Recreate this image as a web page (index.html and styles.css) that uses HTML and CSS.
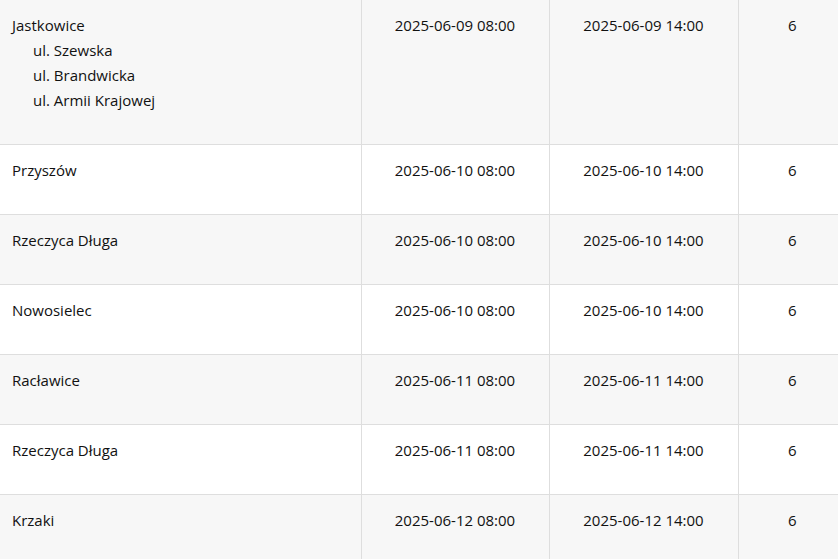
FILE: index.html
```html
<!DOCTYPE html>
<html lang="pl">
<head>
<meta charset="utf-8">
<link rel="stylesheet" href="styles.css">
</head>
<body>
<table class="schedule">
  <colgroup>
    <col class="c-place"><col class="c-date"><col class="c-date2"><col class="c-num">
  </colgroup>
  <tbody>
    <tr class="alt">
      <td class="place">Jastkowice
        <ul class="streets">
          <li>ul. Szewska</li>
          <li>ul. Brandwicka</li>
          <li>ul. Armii Krajowej</li>
        </ul>
      </td>
      <td>2025-06-09 08:00</td><td>2025-06-09 14:00</td><td>6</td>
    </tr>
    <tr>
      <td class="place">Przyszów</td>
      <td>2025-06-10 08:00</td><td>2025-06-10 14:00</td><td>6</td>
    </tr>
    <tr class="alt">
      <td class="place">Rzeczyca Długa</td>
      <td>2025-06-10 08:00</td><td>2025-06-10 14:00</td><td>6</td>
    </tr>
    <tr>
      <td class="place">Nowosielec</td>
      <td>2025-06-10 08:00</td><td>2025-06-10 14:00</td><td>6</td>
    </tr>
    <tr class="alt">
      <td class="place">Racławice</td>
      <td>2025-06-11 08:00</td><td>2025-06-11 14:00</td><td>6</td>
    </tr>
    <tr>
      <td class="place">Rzeczyca Długa</td>
      <td>2025-06-11 08:00</td><td>2025-06-11 14:00</td><td>6</td>
    </tr>
    <tr class="alt">
      <td class="place">Krzaki</td>
      <td>2025-06-12 08:00</td><td>2025-06-12 14:00</td><td>6</td>
    </tr>
  </tbody>
</table>
</body>
</html>
```
FILE: styles.css
```css
html, body {
  margin: 0;
  padding: 0;
  background: #fff;
  overflow: hidden;
}
.schedule {
  border-collapse: collapse;
  table-layout: fixed;
  width: 846px;
  font-family: "Open Sans", "Noto Sans", sans-serif;
  font-size: 15px;
  color: #111;
}
.c-place { width: 361px; }
.c-date { width: 188px; }
.c-date2 { width: 189px; }
.c-num { width: 108px; }
.schedule td {
  vertical-align: top;
  text-align: center;
  padding: 13px 12px 31px 12px;
  line-height: 25px;
  border-bottom: 1px solid #dedede;
  border-left: 1px solid #dedede;
}
.schedule td:first-child { border-left: none; }
.schedule td.place { text-align: left; }
.schedule tr.alt td { background: #f7f7f7; }
.streets {
  list-style: none;
  margin: 0;
  padding: 0 0 0 21px;
}
.streets li { line-height: 25px; }
```
